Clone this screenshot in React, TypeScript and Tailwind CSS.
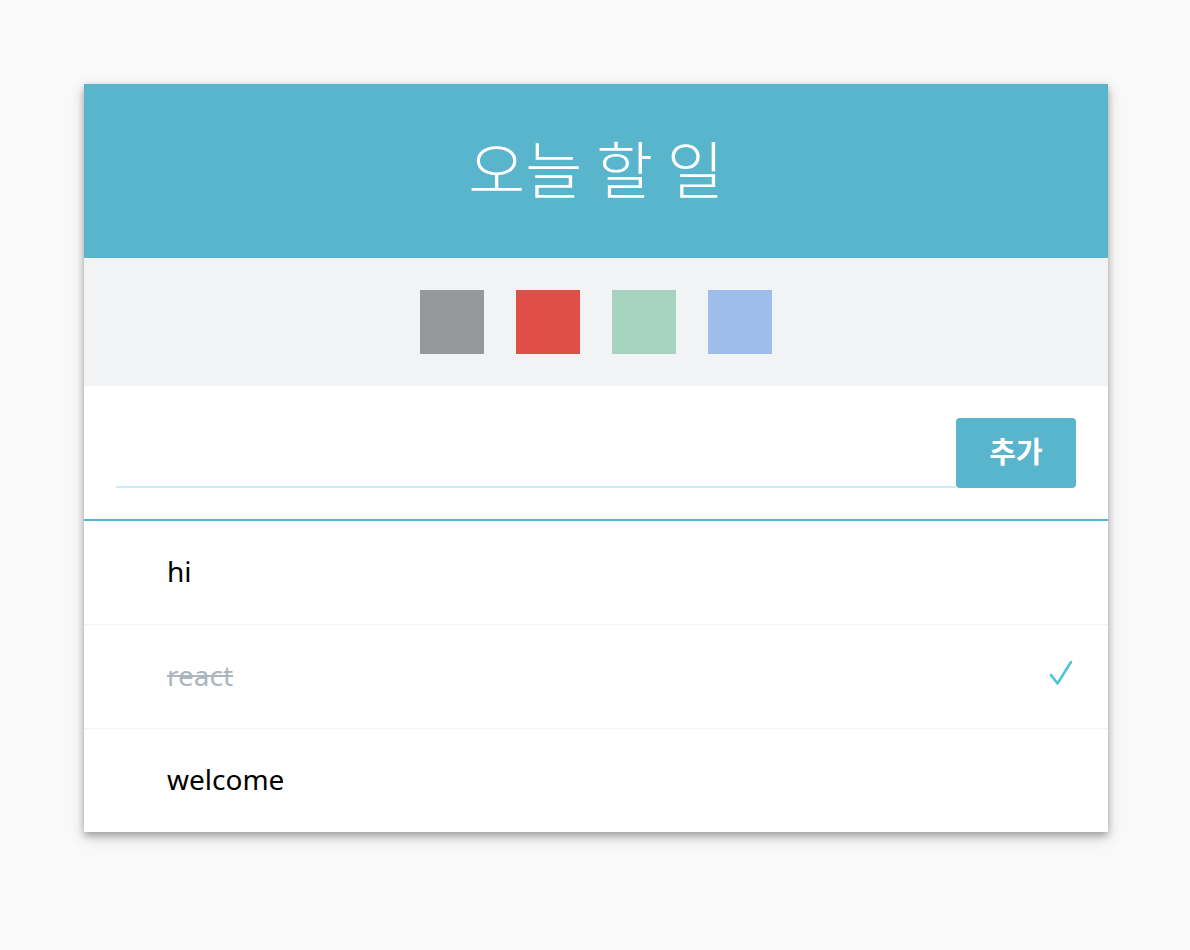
import { useState } from 'react';

interface Todo {
  id: number;
  text: string;
  checked: boolean;
}

const colors = ['#97989b', '#df4f48', '#a6d3c0', '#9dbdea'];

const initialTodos: Todo[] = [
  { id: 1, text: 'hi', checked: false },
  { id: 2, text: 'react', checked: true },
  { id: 3, text: 'welcome', checked: false },
];

function CheckMark() {
  return (
    <svg width="28" height="30" viewBox="0 0 28 30" fill="none">
      <polyline
        points="3,15 9.5,23.5 23,2"
        stroke="#4ec4d6"
        strokeWidth="2.6"
        strokeLinecap="round"
        strokeLinejoin="round"
      />
    </svg>
  );
}

export default function App() {
  const [todos, setTodos] = useState<Todo[]>(initialTodos);
  const [input, setInput] = useState('');

  const toggle = (id: number) =>
    setTodos(todos.map(t => (t.id === id ? { ...t, checked: !t.checked } : t)));

  return (
    <div
      className="min-h-[950px] bg-[#f9f9f9] pt-[84px]"
      style={{ fontFamily: '"Noto Sans", "Noto Sans CJK KR", sans-serif' }}
    >
      <main className="ml-[84px] w-[1024px] bg-white shadow-[0_3px_6px_rgba(0,0,0,0.18),0_5px_12px_rgba(0,0,0,0.25)]">
        {/* 제목 */}
        <div
          className="flex h-[174px] items-center justify-center bg-[#58b5cc] pb-2 text-[62px] font-light text-white"
          style={{ fontFamily: '"Noto Sans CJK KR", sans-serif' }}
        >
          오늘 할 일
        </div>

        {/* 색상 팔레트 */}
        <div className="flex h-[128px] items-center justify-center gap-8 bg-[#f1f3f5]">
          {colors.map(c => (
            <div key={c} className="h-16 w-16" style={{ background: c }} />
          ))}
        </div>

        {/* 입력 폼 */}
        <div className="flex items-end border-b-2 border-[#58b5cc] p-8 pb-[31px]">
          <input
            value={input}
            onChange={e => setInput(e.target.value)}
            className="h-[70px] flex-1 border-b-2 border-[#c5eff7] text-2xl outline-none"
          />
          <button
            className="h-[70px] w-[120px] rounded bg-[#58b5cc] pb-1 text-[29px] font-bold text-white"
            style={{ fontFamily: '"Noto Sans CJK KR", sans-serif' }}
          >
            추가
          </button>
        </div>

        {/* 할 일 목록 */}
        <div>
          {todos.map((todo, i) => (
            <div
              key={todo.id}
              onClick={() => toggle(todo.id)}
              className={`flex items-center pb-1 pl-[83px] pr-[32px] ${
                i > 0 ? 'h-[104px] border-t border-[#f1f3f5]' : 'h-[103px]'
              }`}
            >
              <span
                className={`flex-1 text-[28px] ${
                  todo.checked ? 'text-[#adb5bd] line-through' : 'text-black'
                }`}
              >
                {todo.text}
              </span>
              {todo.checked && <CheckMark />}
            </div>
          ))}
        </div>
      </main>
    </div>
  );
}
